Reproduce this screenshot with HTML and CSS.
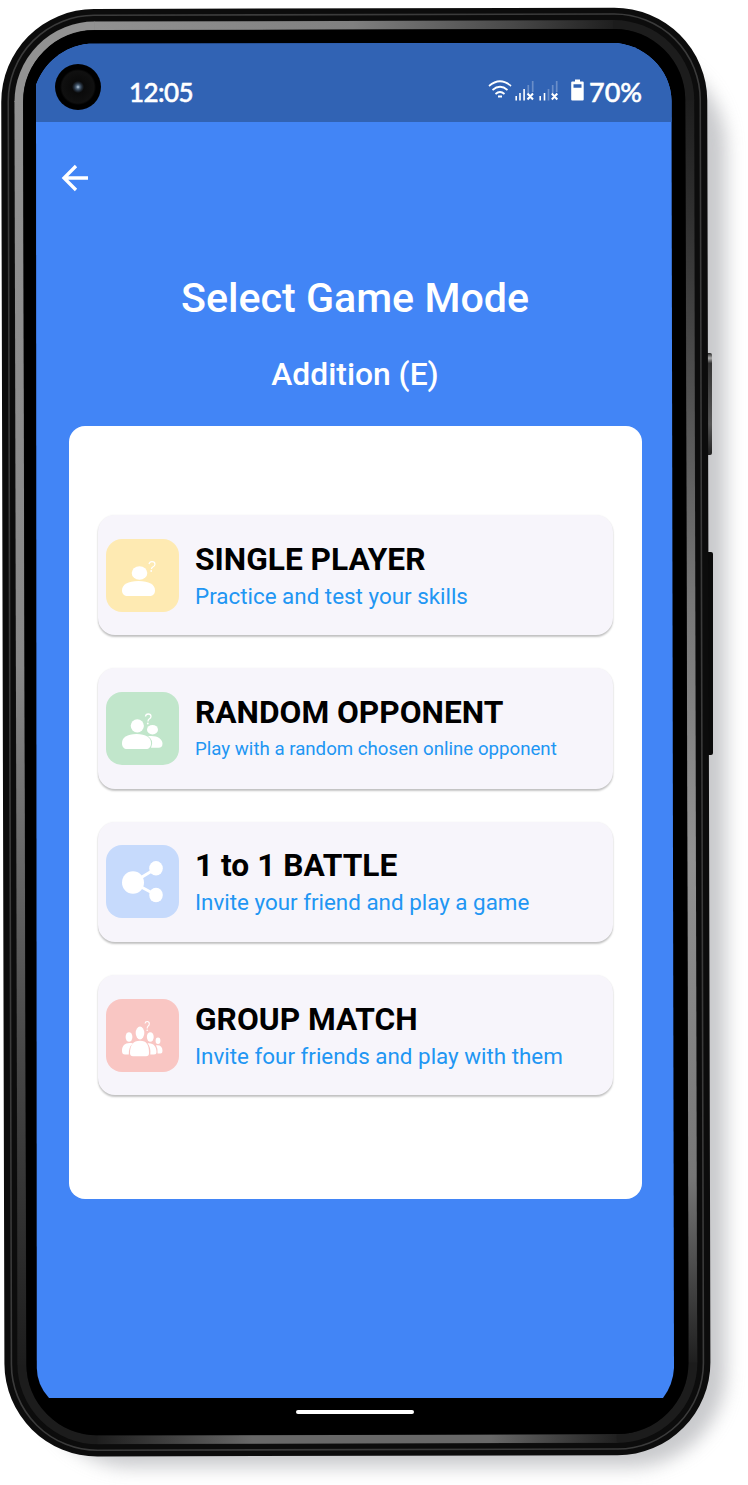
FILE: index.html
```html
<!DOCTYPE html>
<html lang="en">
<head>
<meta charset="utf-8">
<title>Select Game Mode</title>
<link rel="stylesheet" href="styles.css">
</head>
<body>
<div class="device">
  <svg class="frame" width="748" height="1485" viewBox="0 0 748 1485" aria-hidden="true">
    <defs>
      <linearGradient id="gl" gradientUnits="userSpaceOnUse" x1="0" y1="90" x2="0" y2="1370"><stop offset="0" stop-color="#929292"/><stop offset=".45" stop-color="#888"/><stop offset=".75" stop-color="#484848"/><stop offset="1" stop-color="#1c1c1c"/></linearGradient>
      <linearGradient id="gt" gradientUnits="userSpaceOnUse" x1="85" y1="0" x2="620" y2="0"><stop offset="0" stop-color="#929292"/><stop offset=".5" stop-color="#808080"/><stop offset=".8" stop-color="#484848"/><stop offset="1" stop-color="#1c1c1c"/></linearGradient>
      <linearGradient id="gr" gradientUnits="userSpaceOnUse" x1="0" y1="90" x2="0" y2="1370"><stop offset="0" stop-color="#1c1c1c"/><stop offset=".1" stop-color="#303030"/><stop offset=".4" stop-color="#777"/><stop offset=".6" stop-color="#929292"/><stop offset=".85" stop-color="#777"/><stop offset="1" stop-color="#1c1c1c"/></linearGradient>
      <linearGradient id="gb" gradientUnits="userSpaceOnUse" x1="90" y1="0" x2="620" y2="0"><stop offset="0" stop-color="#1c1c1c"/><stop offset=".3" stop-color="#686868"/><stop offset=".75" stop-color="#686868"/><stop offset="1" stop-color="#1c1c1c"/></linearGradient>
      <linearGradient id="key" x1="0" y1="0" x2="0" y2="1"><stop offset="0" stop-color="#222"/><stop offset=".05" stop-color="#aaa"/><stop offset=".1" stop-color="#333"/><stop offset=".7" stop-color="#555"/><stop offset="1" stop-color="#222"/></linearGradient>
      <filter id="soft" x="-20%" y="-20%" width="140%" height="140%"><feGaussianBlur stdDeviation="9"/></filter>
    </defs>
    <rect x="36" y="52" width="690" height="1415" rx="96" fill="#a4a6aa" opacity=".6" filter="url(#soft)"/>
    <rect x="705" y="353" width="7" height="102" rx="2" fill="url(#key)"/>
    <rect x="706" y="552" width="7" height="203" rx="2" fill="#0a0a0a"/>
    <g transform="matrix(1 -.0024 .0025 1 0 0)" fill="none">
      <rect x="1" y="9.2" width="706" height="1447.5" rx="93" fill="#0c0c0c"/>
      <rect x="8" y="15.5" width="692" height="1435" rx="86" stroke="#3b3b3b" stroke-width="1.6"/>
      <rect x="18.500" y="26" width="671" height="1414" rx="76" stroke="#1c1c1c" stroke-width="9"/>
      <g stroke-width="8.500">
        <path d="M18.500 101V1365" stroke="url(#gl)"/>
        <path d="M18.500 102A76 76 0 0 1 94.500 26" stroke="#929292"/>
        <path d="M94 26H613" stroke="url(#gt)"/>
        <path d="M689.500 102V1364" stroke="url(#gr)"/>
        <path d="M94 1440H613" stroke="url(#gb)"/>
      </g>
      <rect x="23" y="30.500" width="662" height="1405" rx="71" fill="#000"/>
    </g>
  </svg>

  <main class="screen">
    <header class="status">
      <span class="camera"></span>
      <span class="time">12:05</span>
      <svg class="signals" width="98" height="24" viewBox="0 0 98 24" fill="none" stroke="#fff" aria-hidden="true">
        <path d="M1 7Q12-2.500 23 7M4.500 11Q12 4.500 19.500 11M7.500 15Q12 11 16.500 15" stroke-width="1.700"/>
        <path d="M10 17.500H14" stroke-width="2"/>
        <path d="M28.200 17V21.500M32 14V21.500M36.100 10V21.500M52.200 17V21.500M56.500 14V21.500" stroke-width="1.600"/>
        <path d="M40.300 6V14M44.700 2V13M60.500 10V21.500M64.700 6V14M68.700 2V13" stroke-width="1.700" opacity=".28"/>
        <path d="M39.500 14.500L45 20.500M45 14.500L39.500 20.500M63.800 14.500L69.300 20.500M69.300 14.500L63.800 20.500" stroke-width="2"/>
        <path d="M87 .5h5v2h2.700q1 0 1 1V20.500q0 1-1 1H84.200q-1 0-1-1V3.500q0-1 1-1H87z" fill="#fff" stroke="none"/>
        <path d="M85.500 5.200h8v3.600h-8z" fill="#3163b4" stroke="none"/>
      </svg>
      <span class="percent">70%</span>
    </header>
    <div class="appbar">
      <svg width="28" height="28" viewBox="0 0 28 28" fill="none" stroke="#fff" stroke-width="3.300" role="img" aria-label="Back"><path d="M27 14H3.500M15 2L3 14L15 26"/></svg>
    </div>
    <h1 class="title">Select Game Mode</h1>
    <h2 class="topic">Addition (E)</h2>
    <section class="panel">
      <button class="mode">
        <span class="tile yellow"><svg width="73" height="73" viewBox="0 0 73 73" fill="#fff"><ellipse cx="33.500" cy="34" rx="7.800" ry="6.800"/><path d="M16 51.500C16 45.500 22 42 32.500 42S49 45.500 49 51.500C49 55 47 57 43 57H22C18 57 16 55 16 51.500z"/><path d="M43 25.200Q43.500 22.700 46 22.700Q49 22.700 49 25.300Q49 27 46.800 28Q45.500 28.700 45.500 30" fill="none" stroke="#fff" stroke-width="1.200"/><circle cx="45.200" cy="32" r=".9"/></svg></span>
        <span class="copy"><strong>SINGLE PLAYER</strong><small>Practice and test your skills</small></span>
      </button>
      <button class="mode">
        <span class="tile green"><svg width="73" height="73" viewBox="0 0 73 73" fill="#fff"><ellipse cx="31.300" cy="33.800" rx="6.600" ry="6.600"/><path d="M16 51C16 45.500 21 42 30.500 42S45 45.500 45 51C45 55 43 57 40 57H21C18 57 16 55 16 51z"/><ellipse cx="46.500" cy="37.700" rx="5.500" ry="4.800"/><path d="M42 44.200C51 43 56.500 47 56.500 51.500Q56.500 55.800 52.500 55.800H45Q48.500 48 42 44.200z"/><path d="M39.500 24.500Q39.800 22 42.200 22Q45 22 45 24.600Q45 26 43.200 27Q42 27.800 42 29.500" fill="none" stroke="#fff" stroke-width="1.300"/><circle cx="41.800" cy="31.500" r=".9"/></svg></span>
        <span class="copy"><strong>RANDOM OPPONENT</strong><small class="tight">Play with a random chosen online opponent</small></span>
      </button>
      <button class="mode">
        <span class="tile blue"><svg width="73" height="73" viewBox="0 0 73 73" fill="#fff"><path d="M50 23.500L27 37.500L50 50" fill="none" stroke="#fff" stroke-width="3"/><ellipse cx="27" cy="37.500" rx="11" ry="11.300"/><ellipse cx="50" cy="23.300" rx="6.800" ry="7.300"/><ellipse cx="50" cy="50" rx="6.800" ry="7.300"/></svg></span>
        <span class="copy"><strong>1 to 1 BATTLE</strong><small>Invite your friend and play a game</small></span>
      </button>
      <button class="mode">
        <span class="tile red"><svg width="73" height="73" viewBox="0 0 73 73" fill="#fff"><ellipse cx="34" cy="34" rx="4.300" ry="6.500"/><path d="M24 54C24 46 27 41.700 34 41.700S43 46 43 54Q43 57.200 40 57.200H27Q24 57.200 24 54z"/><ellipse cx="23" cy="38" rx="3.400" ry="4.800"/><path d="M27 44.500Q22.500 48 22.800 55.500H19Q16 55.500 16 52C16 46 20 43 27 44.500z"/><ellipse cx="44.300" cy="38" rx="3.400" ry="4.800"/><path d="M41.500 44.200C48 43.500 50.500 48 50.500 53Q50.500 55.500 48 55.500H44.300Q45 48 41.500 44.200z"/><ellipse cx="52" cy="41.700" rx="2.400" ry="3.200"/><path d="M50 46.200Q56.500 45.500 56.500 52Q56.500 54.500 54.500 54.500H51.600Q52.200 50 50 46.200z"/><path d="M39 24.500Q39.300 22.500 41.200 22.500Q43.300 22.500 43.300 24.700Q43.300 26.300 42 27.200Q41.200 28 41.200 29.500" fill="none" stroke="#fff" stroke-width="1.100"/><circle cx="41.200" cy="31.300" r=".8"/></svg></span>
        <span class="copy"><strong>GROUP MATCH</strong><small>Invite four friends and play with them</small></span>
      </button>
    </section>
  </main>
  <span class="homebar"></span>
</div>
</body>
</html>
```

FILE: styles.css
```css
* { box-sizing: border-box; }
body { margin: 0; background: #fff; font-family: Roboto, sans-serif; }
.device { position: relative; width: 748px; height: 1485px; padding: 43px 0 0 36px; overflow: hidden; }
.frame { position: absolute; left: 0; top: 0; }
.screen {
  position: relative; width: 638px; height: 1355px;
  background: #4285f6;
  display: flex; flex-direction: column; align-items: center;
  clip-path: path("M0 42C8 20 28 3 53 .8L575 -.3C607 0 635 25 635.5 58L638 1325Q637 1342 627 1355H13Q1 1342 .8 1325Z");
}
.status { width: 100%; height: 79px; flex: none; background: #3163b4; display: flex; align-items: center; color: #fff; padding: 18px 0 0 19px; }
.camera { width: 46px; height: 46px; border-radius: 50%; margin: -9px 28px 0 0; background: radial-gradient(circle at 23px 23px, #b9cbdc 0, #4d6278 2px, #222c38 4px, #0a0a0a 6px, #101010 16px, #000 18px); }
.time, .percent { font: 500 26px/30px Lato, sans-serif; -webkit-text-stroke: .5px #fff; }
.time { width: 359px; letter-spacing: -.6px; }
.signals { display: block; margin-top: -1px; }
.percent { margin-left: 3px; font-size: 27px; }
.appbar { width: 100%; height: 112px; flex: none; padding: 42px 0 0 25px; }
.appbar svg { display: block; }
.title { margin: 39px 0 0; font-size: 41.200px; line-height: 50px; font-weight: 500; color: #fff; }
.topic { margin: 32px 0 0; font-size: 31.800px; line-height: 38px; font-weight: 500; color: #fff; }
.panel { width: 573px; height: 773px; margin-top: 33px; padding: 89px 29px; flex: none; background: #fff; border-radius: 16px; display: flex; flex-direction: column; gap: 33px; }
.mode { appearance: none; width: 100%; height: 120.300px; flex: none; border: 0; padding: 0 8px; border-radius: 17px; background: #f7f5fb; box-shadow: 0 2px 2px rgba(0,0,0,.23), 0 0 2px rgba(0,0,0,.06); display: flex; align-items: center; gap: 16.500px; font-family: inherit; text-align: left; }
.tile { width: 73px; height: 73px; flex: none; border-radius: 16px; }
.tile svg { display: block; }
.yellow { background: #feeab2; }
.green { background: #c1e6cb; }
.blue { background: #c6dafc; }
.red { background: #f9c6c3; }
.copy { display: flex; flex-direction: column; white-space: nowrap; padding-top: 4px; }
.copy strong { font-size: 31.700px; line-height: 38px; font-weight: 700; color: #000; }
.copy small { font-size: 22.400px; line-height: 35px; color: #2196f3; }
.copy .tight { font-size: 18.680px; }
.homebar { position: absolute; left: 296px; top: 1410px; width: 118px; height: 4px; border-radius: 2px; background: #fff; }
```
